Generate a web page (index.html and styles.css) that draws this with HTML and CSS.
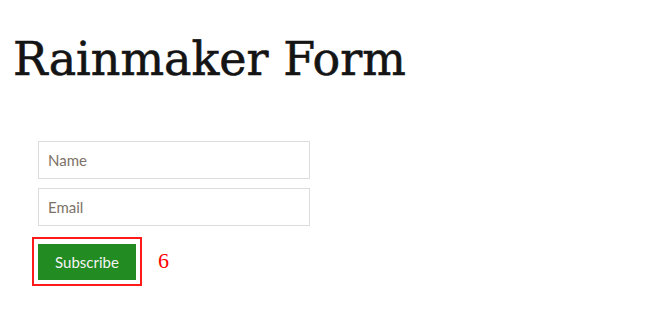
FILE: index.html
```html
<!DOCTYPE html>
<html lang="en">
<head>
<meta charset="utf-8">
<title>Rainmaker Form</title>
<link rel="stylesheet" href="styles.css">
</head>
<body>
<h1 class="title">Rainmaker Form</h1>
<form class="signup">
  <input class="field" type="text" placeholder="Name">
  <input class="field" type="email" placeholder="Email">
  <div class="actions">
    <div class="highlight">
      <button class="subscribe" type="button">Subscribe</button>
    </div>
    <span class="count">6</span>
  </div>
</form>
</body>
</html>
```

FILE: styles.css
```css
html, body {
  margin: 0;
  padding: 0;
  background: #fff;
}
body {
  padding: 0 0 0 13px;
}
.title {
  font-family: "DejaVu Serif", serif;
  font-weight: normal;
  font-size: 46px;
  line-height: 1;
  color: #141414;
  -webkit-text-stroke: 0.6px #141414;
  margin: 36px 0 0 0;
}
.signup {
  display: flex;
  flex-direction: column;
  align-items: flex-start;
  gap: 9px;
  margin: 59px 0 0 25px;
}
.field {
  box-sizing: border-box;
  width: 272px;
  height: 38px;
  border: 1px solid #dcdcdc;
  padding: 0 9px;
  margin: 0;
  font-family: "Lato", sans-serif;
  font-size: 15px;
  color: #333;
  background: #fff;
  outline: none;
}
.field::placeholder {
  color: #7c7268;
  opacity: 1;
}
.actions {
  display: flex;
  align-items: center;
  gap: 16px;
  margin: 2px 0 0 -6px;
}
.highlight {
  border: 2px solid #ff1a1a;
  padding: 5px 4px 4px 4px;
  display: flex;
}
.subscribe {
  box-sizing: border-box;
  width: 98px;
  height: 36px;
  border: none;
  background: #228b22;
  color: #f4f4f4;
  font-family: "Lato", sans-serif;
  font-size: 15px;
  padding: 0;
  margin: 0;
}
.count {
  font-family: "Liberation Serif", serif;
  font-size: 22px;
  color: #ff0000;
  margin-top: -2px;
}
```
